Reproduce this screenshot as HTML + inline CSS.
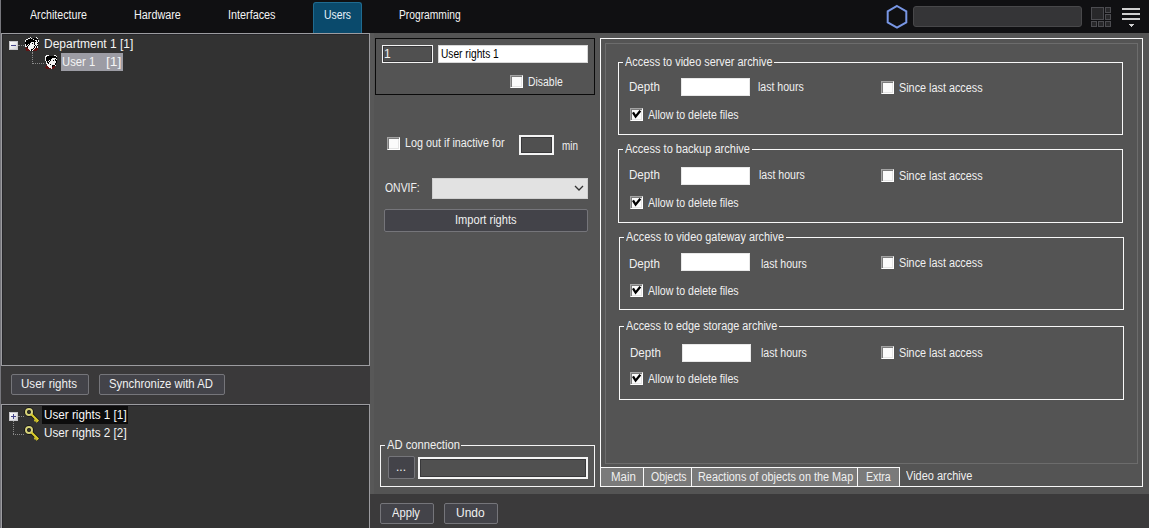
<!DOCTYPE html>
<html><head><meta charset="utf-8">
<style>
*{box-sizing:border-box;margin:0;padding:0}
html,body{width:1149px;height:528px;overflow:hidden;background:#545454;font-family:"Liberation Sans",sans-serif;color:#fff;position:relative}
.a{position:absolute}
.t{position:absolute;white-space:pre;line-height:1;font-size:11px;color:#f0f0f0;transform-origin:0 0}
.cb{position:absolute;width:13px;height:13px;background:#fbfbfb;border:1px solid #fff;border-left-color:#a4a4a4;border-top-color:#a4a4a4;box-shadow:inset 1px 1px 0 #7c7c7c,inset -1px -1px 0 #e4e4e4}
.cbc{position:absolute;width:13px;height:13px;background:#fbfbfb;border:1px solid #fff;border-left-color:#a4a4a4;border-top-color:#a4a4a4;box-shadow:inset 1px 1px 0 #7c7c7c,inset -1px -1px 0 #e4e4e4}

.btn{position:absolute;background:#434349;border:1px solid #75757a;border-radius:2px}
</style></head><body>

<div class="a" style="left:0;top:0;width:1149px;height:33px;background:#101012"></div>
<div class="a" style="left:313px;top:2px;width:49px;height:31px;background:#0a4a6c;border:1px solid #1f6b90;border-bottom:none;border-radius:3px 3px 0 0"></div>
<svg class="a" style="left:885px;top:4px" width="24" height="26" viewBox="0 0 24 26"><polygon points="12,2 21.3,7.3 21.3,18.3 12,23.6 2.7,18.3 2.7,7.3" fill="none" stroke="#7896e4" stroke-width="2"/></svg>
<div class="a" style="left:913px;top:6px;width:169px;height:21px;background:#353537;border:1px solid #48484a;border-radius:3px"></div>
<svg class="a" style="left:1091px;top:7px" width="20" height="20" viewBox="0 0 20 20" shape-rendering="crispEdges"><g fill="#28282a" stroke="#4c4c50" stroke-width="1"><rect x="0.5" y="0.5" width="12" height="12"/><rect x="14.5" y="0.5" width="5" height="5"/><rect x="14.5" y="7.5" width="5" height="5"/><rect x="0.5" y="14.5" width="5" height="5"/><rect x="7.5" y="14.5" width="5" height="5"/><rect x="14.5" y="14.5" width="5" height="5"/></g></svg>
<svg class="a" style="left:1122px;top:7px" width="20" height="21" viewBox="0 0 20 21" shape-rendering="crispEdges"><g fill="#d0d0d0"><rect x="0" y="1" width="18" height="2"/><rect x="0" y="6" width="18" height="2"/><rect x="0" y="11" width="18" height="2"/></g><polygon points="6,16.5 13,16.5 9.5,20" fill="#d0d0d0"/></svg>

<div class="a" style="left:0;top:0;width:1px;height:528px;background:#76767c"></div>
<div class="a" style="left:1px;top:33px;width:369px;height:333px;background:#323232;border:1px solid #9c9ca0;box-shadow:inset 1px 1px 0 #26262a"></div>
<div class="a" style="left:1px;top:366px;width:369px;height:38px;background:#3a393a"></div>
<div class="a" style="left:1px;top:404px;width:369px;height:130px;background:#323232;border:1px solid #9c9ca0;box-shadow:inset 1px 1px 0 #26262a"></div>
<div class="a" style="left:370px;top:33px;width:4px;height:461px;background:#585858"></div>

<div class="a" style="left:9px;top:41px;width:9px;height:9px;background:linear-gradient(135deg,#fff,#d4d4d8);border:1px solid #c8c8cc"></div>
<div class="a" style="left:11px;top:45px;width:5px;height:1px;background:#44448a"></div>
<div class="a" style="left:18px;top:45px;width:6px;height:0;border-top:1px dotted #8a8a8a"></div>
<div class="a" style="left:32px;top:52px;width:0;height:12px;border-left:1px dotted #8a8a8a"></div>
<div class="a" style="left:33px;top:63px;width:11px;height:0;border-top:1px dotted #8a8a8a"></div>
<svg class="a" style="left:25px;top:37px" width="14" height="14" viewBox="0 0 14 14" shape-rendering="crispEdges"><rect x="5" y="0" width="1" height="1" fill="#f2f2f2"/><rect x="11" y="0" width="1" height="1" fill="#f2f2f2"/><rect x="3" y="1" width="2" height="1" fill="#f2f2f2"/><rect x="5" y="1" width="1" height="1" fill="#000000"/><rect x="6" y="1" width="1" height="1" fill="#f2f2f2"/><rect x="8" y="1" width="3" height="1" fill="#000000"/><rect x="12" y="1" width="1" height="1" fill="#f2f2f2"/><rect x="1" y="2" width="2" height="1" fill="#f2f2f2"/><rect x="3" y="2" width="5" height="1" fill="#000000"/><rect x="8" y="2" width="1" height="1" fill="#f2f2f2"/><rect x="9" y="2" width="4" height="1" fill="#000000"/><rect x="0" y="3" width="1" height="1" fill="#f2f2f2"/><rect x="1" y="3" width="9" height="1" fill="#000000"/><rect x="10" y="3" width="2" height="1" fill="#f2f2f2"/><rect x="12" y="3" width="1" height="1" fill="#000000"/><rect x="13" y="3" width="1" height="1" fill="#f2f2f2"/><rect x="0" y="4" width="1" height="1" fill="#f2f2f2"/><rect x="1" y="4" width="10" height="1" fill="#000000"/><rect x="11" y="4" width="1" height="1" fill="#f2f2f2"/><rect x="12" y="4" width="1" height="1" fill="#000000"/><rect x="13" y="4" width="1" height="1" fill="#f2f2f2"/><rect x="0" y="5" width="6" height="1" fill="#000000"/><rect x="6" y="5" width="3" height="1" fill="#f2f2f2"/><rect x="9" y="5" width="1" height="1" fill="#000000"/><rect x="10" y="5" width="3" height="1" fill="#f2f2f2"/><rect x="13" y="5" width="1" height="1" fill="#000000"/><rect x="0" y="6" width="5" height="1" fill="#000000"/><rect x="5" y="6" width="2" height="1" fill="#f2f2f2"/><rect x="7" y="6" width="1" height="1" fill="#000000"/><rect x="8" y="6" width="1" height="1" fill="#f2f2f2"/><rect x="9" y="6" width="1" height="1" fill="#000000"/><rect x="10" y="6" width="2" height="1" fill="#f2f2f2"/><rect x="12" y="6" width="1" height="1" fill="#000000"/><rect x="0" y="7" width="1" height="1" fill="#f2f2f2"/><rect x="1" y="7" width="2" height="1" fill="#000000"/><rect x="3" y="7" width="1" height="1" fill="#f2f2f2"/><rect x="4" y="7" width="1" height="1" fill="#000000"/><rect x="5" y="7" width="4" height="1" fill="#f2f2f2"/><rect x="9" y="7" width="1" height="1" fill="#000000"/><rect x="10" y="7" width="3" height="1" fill="#f2f2f2"/><rect x="0" y="8" width="1" height="1" fill="#f2f2f2"/><rect x="1" y="8" width="1" height="1" fill="#000000"/><rect x="2" y="8" width="1" height="1" fill="#f2f2f2"/><rect x="3" y="8" width="1" height="1" fill="#000000"/><rect x="4" y="8" width="6" height="1" fill="#f2f2f2"/><rect x="10" y="8" width="1" height="1" fill="#000000"/><rect x="11" y="8" width="1" height="1" fill="#f2f2f2"/><rect x="12" y="8" width="1" height="1" fill="#000000"/><rect x="0" y="9" width="2" height="1" fill="#f2f2f2"/><rect x="2" y="9" width="1" height="1" fill="#000000"/><rect x="3" y="9" width="6" height="1" fill="#f2f2f2"/><rect x="9" y="9" width="1" height="1" fill="#000000"/><rect x="10" y="9" width="1" height="1" fill="#f2f2f2"/><rect x="11" y="9" width="1" height="1" fill="#000000"/><rect x="12" y="9" width="1" height="1" fill="#f2f2f2"/><rect x="1" y="10" width="1" height="1" fill="#5e1414"/><rect x="2" y="10" width="1" height="1" fill="#000000"/><rect x="3" y="10" width="6" height="1" fill="#f2f2f2"/><rect x="9" y="10" width="1" height="1" fill="#000000"/><rect x="10" y="10" width="1" height="1" fill="#f2f2f2"/><rect x="11" y="10" width="1" height="1" fill="#000000"/><rect x="12" y="10" width="1" height="1" fill="#f2f2f2"/><rect x="0" y="11" width="3" height="1" fill="#5e1414"/><rect x="3" y="11" width="5" height="1" fill="#f2f2f2"/><rect x="8" y="11" width="1" height="1" fill="#000000"/><rect x="9" y="11" width="1" height="1" fill="#f2f2f2"/><rect x="10" y="11" width="3" height="1" fill="#5e1414"/><rect x="1" y="12" width="3" height="1" fill="#5e1414"/><rect x="4" y="12" width="2" height="1" fill="#f2f2f2"/><rect x="6" y="12" width="2" height="1" fill="#000000"/><rect x="8" y="12" width="1" height="1" fill="#f2f2f2"/><rect x="9" y="12" width="4" height="1" fill="#5e1414"/><rect x="1" y="13" width="4" height="1" fill="#5e1414"/><rect x="5" y="13" width="1" height="1" fill="#f2f2f2"/><rect x="6" y="13" width="1" height="1" fill="#000000"/><rect x="7" y="13" width="1" height="1" fill="#f2f2f2"/><rect x="8" y="13" width="4" height="1" fill="#5e1414"/></svg>
<div class="a" style="left:61px;top:53px;width:62px;height:18px;background:#9c9ca4"></div>
<svg class="a" style="left:45px;top:55px" width="12" height="14" viewBox="0 0 12 14" shape-rendering="crispEdges"><rect x="1" y="0" width="3" height="1" fill="#f2f2f2"/><rect x="9" y="0" width="2" height="1" fill="#f2f2f2"/><rect x="0" y="1" width="2" height="1" fill="#f2f2f2"/><rect x="2" y="1" width="9" height="1" fill="#000000"/><rect x="11" y="1" width="1" height="1" fill="#f2f2f2"/><rect x="0" y="2" width="1" height="1" fill="#f2f2f2"/><rect x="1" y="2" width="11" height="1" fill="#000000"/><rect x="0" y="3" width="1" height="1" fill="#f2f2f2"/><rect x="1" y="3" width="6" height="1" fill="#000000"/><rect x="7" y="3" width="4" height="1" fill="#f2f2f2"/><rect x="11" y="3" width="1" height="1" fill="#000000"/><rect x="0" y="4" width="1" height="1" fill="#f2f2f2"/><rect x="1" y="4" width="5" height="1" fill="#000000"/><rect x="6" y="4" width="4" height="1" fill="#f2f2f2"/><rect x="10" y="4" width="1" height="1" fill="#000000"/><rect x="11" y="4" width="1" height="1" fill="#f2f2f2"/><rect x="0" y="5" width="1" height="1" fill="#f2f2f2"/><rect x="1" y="5" width="3" height="1" fill="#000000"/><rect x="4" y="5" width="1" height="1" fill="#f2f2f2"/><rect x="5" y="5" width="1" height="1" fill="#000000"/><rect x="6" y="5" width="2" height="1" fill="#f2f2f2"/><rect x="8" y="5" width="1" height="1" fill="#000000"/><rect x="9" y="5" width="1" height="1" fill="#f2f2f2"/><rect x="10" y="5" width="2" height="1" fill="#000000"/><rect x="1" y="6" width="1" height="1" fill="#f2f2f2"/><rect x="2" y="6" width="1" height="1" fill="#000000"/><rect x="3" y="6" width="1" height="1" fill="#f2f2f2"/><rect x="4" y="6" width="1" height="1" fill="#000000"/><rect x="5" y="6" width="6" height="1" fill="#f2f2f2"/><rect x="11" y="6" width="1" height="1" fill="#000000"/><rect x="1" y="7" width="1" height="1" fill="#f2f2f2"/><rect x="2" y="7" width="2" height="1" fill="#000000"/><rect x="4" y="7" width="7" height="1" fill="#f2f2f2"/><rect x="11" y="7" width="1" height="1" fill="#000000"/><rect x="1" y="8" width="2" height="1" fill="#f2f2f2"/><rect x="3" y="8" width="1" height="1" fill="#000000"/><rect x="4" y="8" width="6" height="1" fill="#f2f2f2"/><rect x="10" y="8" width="1" height="1" fill="#000000"/><rect x="2" y="9" width="3" height="1" fill="#f2f2f2"/><rect x="5" y="9" width="1" height="1" fill="#000000"/><rect x="6" y="9" width="4" height="1" fill="#f2f2f2"/><rect x="10" y="9" width="1" height="1" fill="#000000"/><rect x="1" y="10" width="1" height="1" fill="#5e1414"/><rect x="2" y="10" width="5" height="1" fill="#f2f2f2"/><rect x="7" y="10" width="3" height="1" fill="#000000"/><rect x="10" y="10" width="1" height="1" fill="#f2f2f2"/><rect x="1" y="11" width="2" height="1" fill="#5e1414"/><rect x="3" y="11" width="4" height="1" fill="#f2f2f2"/><rect x="7" y="11" width="1" height="1" fill="#000000"/><rect x="8" y="11" width="2" height="1" fill="#5e1414"/><rect x="0" y="12" width="4" height="1" fill="#5e1414"/><rect x="4" y="12" width="3" height="1" fill="#f2f2f2"/><rect x="7" y="12" width="3" height="1" fill="#5e1414"/><rect x="1" y="13" width="5" height="1" fill="#5e1414"/><rect x="6" y="13" width="1" height="1" fill="#f2f2f2"/><rect x="7" y="13" width="2" height="1" fill="#5e1414"/></svg>

<div class="btn" style="left:11px;top:374px;width:78px;height:21px"></div>
<div class="btn" style="left:99px;top:374px;width:126px;height:21px"></div>

<div class="a" style="left:9px;top:412px;width:9px;height:9px;background:linear-gradient(135deg,#fff,#d4d4d8);border:1px solid #c8c8cc"></div>
<div class="a" style="left:11px;top:416px;width:5px;height:1px;background:#44448a"></div>
<div class="a" style="left:13px;top:414px;width:1px;height:5px;background:#44448a"></div>
<div class="a" style="left:18px;top:416px;width:6px;height:0;border-top:1px dotted #8a8a8a"></div>
<div class="a" style="left:13px;top:421px;width:0;height:13px;border-left:1px dotted #8a8a8a"></div>
<div class="a" style="left:13px;top:434px;width:11px;height:0;border-top:1px dotted #8a8a8a"></div>
<svg class="a" style="left:24px;top:407px" width="18" height="18" viewBox="0 0 18 18">
<circle cx="5" cy="5" r="3" fill="none" stroke="#111" stroke-width="3.6"/>
<path d="M7.3 7.3 L14.5 14.5" stroke="#111" stroke-width="3.6" fill="none"/>
<circle cx="5" cy="5" r="3" fill="none" stroke="#d6d27a" stroke-width="2"/>
<path d="M7.3 7.3 L14.3 14.3" stroke="#d9cc2c" stroke-width="2.2" fill="none"/>
<path d="M10.5 12.5 L11.5 14.5 M12.5 14.2 L13.2 15.3" stroke="#e2d430" stroke-width="1.6" fill="none"/>
</svg>
<svg class="a" style="left:24px;top:425px" width="18" height="18" viewBox="0 0 18 18">
<circle cx="5" cy="5" r="3" fill="none" stroke="#111" stroke-width="3.6"/>
<path d="M7.3 7.3 L14.5 14.5" stroke="#111" stroke-width="3.6" fill="none"/>
<circle cx="5" cy="5" r="3" fill="none" stroke="#d6d27a" stroke-width="2"/>
<path d="M7.3 7.3 L14.3 14.3" stroke="#d9cc2c" stroke-width="2.2" fill="none"/>
<path d="M10.5 12.5 L11.5 14.5 M12.5 14.2 L13.2 15.3" stroke="#e2d430" stroke-width="1.6" fill="none"/>
</svg>
<div class="a" style="left:42px;top:406px;width:86px;height:18px;background:#0c0c0c"></div>

<!-- middle -->
<div class="a" style="left:375px;top:38px;width:220px;height:57px;border:1px solid #0a0a0a"></div>
<div class="a" style="left:382px;top:45px;width:51px;height:18px;border:1px solid #f4f4f4;box-shadow:inset 0 0 0 1px #38383a;background:#505050"></div>
<div class="a" style="left:438px;top:45px;width:150px;height:18px;background:#fff;border:1px solid #d8d8d8"></div>
<div class="cb" style="left:510px;top:75px"></div>
<div class="cb" style="left:387px;top:137px"></div>
<div class="a" style="left:519px;top:135px;width:35px;height:20px;border:2px solid #f4f4f4;box-shadow:inset 0 0 0 1px #38383a;background:#505050"></div>
<div class="a" style="left:432px;top:178px;width:156px;height:21px;background:#e2e2e2;border:1px solid #d0d0d0"></div>
<svg class="a" style="left:574px;top:185px" width="10" height="7" viewBox="0 0 10 7"><path d="M1,1 L5,5 L9,1" fill="none" stroke="#333" stroke-width="1.3"/></svg>
<div class="btn" style="left:384px;top:209px;width:204px;height:23px"></div>

<div class="a" style="left:380px;top:445px;width:215px;height:42px;border:1px solid #f4f4f4"></div>
<div class="a" style="left:385px;top:439px;width:76px;height:12px;background:#545454"></div>
<div class="btn" style="left:388px;top:456px;width:27px;height:23px"></div>
<div class="a" style="left:418px;top:457px;width:170px;height:22px;border:2px solid #f4f4f4;box-shadow:inset 0 0 0 1px #38383a;background:#505050"></div>

<!-- right panel -->
<div class="a" style="left:600px;top:38px;width:543px;height:449px;border:1px solid #f8f8f8"></div>
<div class="a" style="left:605px;top:43px;width:533px;height:421px;border:1px solid #6c6c6c"></div>
<div class="a" style="left:618px;top:62px;width:505px;height:73px;border:1px solid #f8f8f8"></div>
<div class="a" style="left:623px;top:56px;width:151px;height:12px;background:#545454"></div>
<div class="a" style="left:681px;top:78px;width:69px;height:18px;background:#fff;border:1px solid #e8e8e8"></div>
<div class="cbc" style="left:630px;top:108px"></div>
<svg class="a" style="left:630px;top:108px" width="13" height="13" viewBox="0 0 13 13"><polyline points="3.6,5.4 5.6,8.6 9.6,3.6" fill="none" stroke="#000" stroke-width="2.3" stroke-linecap="square"/></svg>
<div class="cb" style="left:881px;top:81px"></div>
<div class="a" style="left:618px;top:149px;width:505px;height:74px;border:1px solid #f8f8f8"></div>
<div class="a" style="left:623px;top:143px;width:129px;height:12px;background:#545454"></div>
<div class="a" style="left:681px;top:167px;width:69px;height:18px;background:#fff;border:1px solid #e8e8e8"></div>
<div class="cbc" style="left:630px;top:196px"></div>
<svg class="a" style="left:630px;top:196px" width="13" height="13" viewBox="0 0 13 13"><polyline points="3.6,5.4 5.6,8.6 9.6,3.6" fill="none" stroke="#000" stroke-width="2.3" stroke-linecap="square"/></svg>
<div class="cb" style="left:881px;top:169px"></div>
<div class="a" style="left:619px;top:237px;width:505px;height:73px;border:1px solid #f8f8f8"></div>
<div class="a" style="left:624px;top:231px;width:162px;height:12px;background:#545454"></div>
<div class="a" style="left:681px;top:253px;width:69px;height:18px;background:#fff;border:1px solid #e8e8e8"></div>
<div class="cbc" style="left:630px;top:284px"></div>
<svg class="a" style="left:630px;top:284px" width="13" height="13" viewBox="0 0 13 13"><polyline points="3.6,5.4 5.6,8.6 9.6,3.6" fill="none" stroke="#000" stroke-width="2.3" stroke-linecap="square"/></svg>
<div class="cb" style="left:881px;top:256px"></div>
<div class="a" style="left:619px;top:326px;width:505px;height:74px;border:1px solid #f8f8f8"></div>
<div class="a" style="left:624px;top:320px;width:155px;height:12px;background:#545454"></div>
<div class="a" style="left:682px;top:344px;width:69px;height:18px;background:#fff;border:1px solid #e8e8e8"></div>
<div class="cbc" style="left:630px;top:372px"></div>
<svg class="a" style="left:630px;top:372px" width="13" height="13" viewBox="0 0 13 13"><polyline points="3.6,5.4 5.6,8.6 9.6,3.6" fill="none" stroke="#000" stroke-width="2.3" stroke-linecap="square"/></svg>
<div class="cb" style="left:881px;top:346px"></div>
<div class="a" style="left:601px;top:467px;width:299px;height:20px;background:#7a7a7a;border-top:1px solid #f8f8f8"></div>
<div class="a" style="left:601px;top:486px;width:542px;height:1px;background:#f8f8f8"></div>
<div class="a" style="left:643px;top:467px;width:1px;height:20px;background:#f8f8f8"></div>
<div class="a" style="left:691px;top:467px;width:1px;height:20px;background:#f8f8f8"></div>
<div class="a" style="left:857px;top:467px;width:1px;height:20px;background:#f8f8f8"></div>
<div class="a" style="left:899px;top:467px;width:1px;height:20px;background:#f8f8f8"></div>

<div class="a" style="left:370px;top:494px;width:779px;height:34px;background:#3b3a3b"></div>
<div class="btn" style="left:380px;top:503px;width:54px;height:21px"></div>
<div class="btn" style="left:444px;top:503px;width:54px;height:21px"></div>
<div class="t" style="left:30.00px;top:9px;font-size:12px;transform:scaleX(0.8889);color:#f4f4f4">Architecture</div>
<div class="t" style="left:134.10px;top:9px;font-size:12px;transform:scaleX(0.9000);color:#f4f4f4">Hardware</div>
<div class="t" style="left:228.10px;top:9px;font-size:12px;transform:scaleX(0.9020);color:#f4f4f4">Interfaces</div>
<div class="t" style="left:324.14px;top:9px;font-size:12px;transform:scaleX(0.8621);color:#e8f2fa">Users</div>
<div class="t" style="left:399.14px;top:9px;font-size:12px;transform:scaleX(0.8551);color:#f4f4f4">Programming</div>
<div class="t" style="left:44.00px;top:38px;font-size:12px;transform:scaleX(1.0000);color:#f4f4f4">Department 1 [1]</div>
<div class="t" style="left:62.06px;top:56px;font-size:12px;transform:scaleX(0.9394);color:#f4f4f4">User 1</div>
<div class="t" style="left:105.85px;top:56px;font-size:12px;transform:scaleX(1.1500);color:#f4f4f4">[1]</div>
<div class="t" style="left:44.02px;top:409px;font-size:12px;transform:scaleX(0.9756);color:#f8f8f8">User rights 1 [1]</div>
<div class="t" style="left:44.02px;top:427px;font-size:12px;transform:scaleX(0.9756);color:#f4f4f4">User rights 2 [2]</div>
<div class="t" style="left:21.04px;top:378px;font-size:12px;transform:scaleX(0.9643);color:#f0f0f0">User rights</div>
<div class="t" style="left:109.06px;top:378px;font-size:12px;transform:scaleX(0.9444);color:#f0f0f0">Synchronize with AD</div>
<div class="t" style="left:384.00px;top:48px;font-size:12px;transform:scaleX(1.0000);color:#f0f0f0">1</div>
<div class="t" style="left:441.15px;top:48px;font-size:12px;transform:scaleX(0.8485);color:#000000">User rights 1</div>
<div class="t" style="left:528.13px;top:76px;font-size:12px;transform:scaleX(0.8684);color:#f0f0f0">Disable</div>
<div class="t" style="left:405.10px;top:137px;font-size:12px;transform:scaleX(0.8991);color:#f0f0f0">Log out if inactive for</div>
<div class="t" style="left:562.18px;top:140px;font-size:12px;transform:scaleX(0.8235);color:#f0f0f0">min</div>
<div class="t" style="left:385.00px;top:182px;font-size:12px;transform:scaleX(0.8684);color:#f0f0f0">ONVIF:</div>
<div class="t" style="left:455.08px;top:214px;font-size:12px;transform:scaleX(0.9231);color:#f0f0f0">Import rights</div>
<div class="t" style="left:387.00px;top:439px;font-size:12px;transform:scaleX(0.9342);color:#f0f0f0">AD connection</div>
<div class="t" style="left:396.00px;top:461px;font-size:12px;transform:scaleX(1.0000);color:#f0f0f0">...</div>
<div class="t" style="left:392.00px;top:507px;font-size:12px;transform:scaleX(0.9310);color:#f0f0f0">Apply</div>
<div class="t" style="left:456.00px;top:507px;font-size:12px;transform:scaleX(1.0000);color:#f0f0f0">Undo</div>
<div class="t" style="left:625.00px;top:56px;font-size:12px;transform:scaleX(0.9068);color:#f0f0f0">Access to video server archive</div>
<div class="t" style="left:629.03px;top:81px;font-size:12px;transform:scaleX(0.9655);color:#f0f0f0">Depth</div>
<div class="t" style="left:758.12px;top:81px;font-size:12px;transform:scaleX(0.8800);color:#f0f0f0">last hours</div>
<div class="t" style="left:648.00px;top:109px;font-size:12px;transform:scaleX(0.8824);color:#f0f0f0">Allow to delete files</div>
<div class="t" style="left:899.10px;top:82px;font-size:12px;transform:scaleX(0.9011);color:#f0f0f0">Since last access</div>
<div class="t" style="left:625.00px;top:143px;font-size:12px;transform:scaleX(0.9185);color:#f0f0f0">Access to backup archive</div>
<div class="t" style="left:629.03px;top:169px;font-size:12px;transform:scaleX(0.9655);color:#f0f0f0">Depth</div>
<div class="t" style="left:759.12px;top:169px;font-size:12px;transform:scaleX(0.8800);color:#f0f0f0">last hours</div>
<div class="t" style="left:648.00px;top:197px;font-size:12px;transform:scaleX(0.8824);color:#f0f0f0">Allow to delete files</div>
<div class="t" style="left:899.10px;top:170px;font-size:12px;transform:scaleX(0.9011);color:#f0f0f0">Since last access</div>
<div class="t" style="left:626.00px;top:231px;font-size:12px;transform:scaleX(0.9075);color:#f0f0f0">Access to video gateway archive</div>
<div class="t" style="left:629.03px;top:258px;font-size:12px;transform:scaleX(0.9655);color:#f0f0f0">Depth</div>
<div class="t" style="left:761.12px;top:258px;font-size:12px;transform:scaleX(0.8800);color:#f0f0f0">last hours</div>
<div class="t" style="left:648.00px;top:285px;font-size:12px;transform:scaleX(0.8824);color:#f0f0f0">Allow to delete files</div>
<div class="t" style="left:899.10px;top:257px;font-size:12px;transform:scaleX(0.9011);color:#f0f0f0">Since last access</div>
<div class="t" style="left:626.00px;top:320px;font-size:12px;transform:scaleX(0.9036);color:#f0f0f0">Access to edge storage archive</div>
<div class="t" style="left:630.03px;top:347px;font-size:12px;transform:scaleX(0.9655);color:#f0f0f0">Depth</div>
<div class="t" style="left:761.12px;top:347px;font-size:12px;transform:scaleX(0.8800);color:#f0f0f0">last hours</div>
<div class="t" style="left:648.00px;top:373px;font-size:12px;transform:scaleX(0.8824);color:#f0f0f0">Allow to delete files</div>
<div class="t" style="left:899.10px;top:347px;font-size:12px;transform:scaleX(0.9011);color:#f0f0f0">Since last access</div>
<div class="t" style="left:611.04px;top:471px;font-size:12px;transform:scaleX(0.9565);color:#f0f0f0">Main</div>
<div class="t" style="left:651.00px;top:471px;font-size:12px;transform:scaleX(0.8750);color:#f0f0f0">Objects</div>
<div class="t" style="left:698.09px;top:471px;font-size:12px;transform:scaleX(0.9053);color:#f0f0f0">Reactions of objects on the Map</div>
<div class="t" style="left:866.12px;top:471px;font-size:12px;transform:scaleX(0.8846);color:#f0f0f0">Extra</div>
<div class="t" style="left:906.00px;top:470px;font-size:12px;transform:scaleX(0.9155);color:#f0f0f0">Video archive</div>
</body></html>
